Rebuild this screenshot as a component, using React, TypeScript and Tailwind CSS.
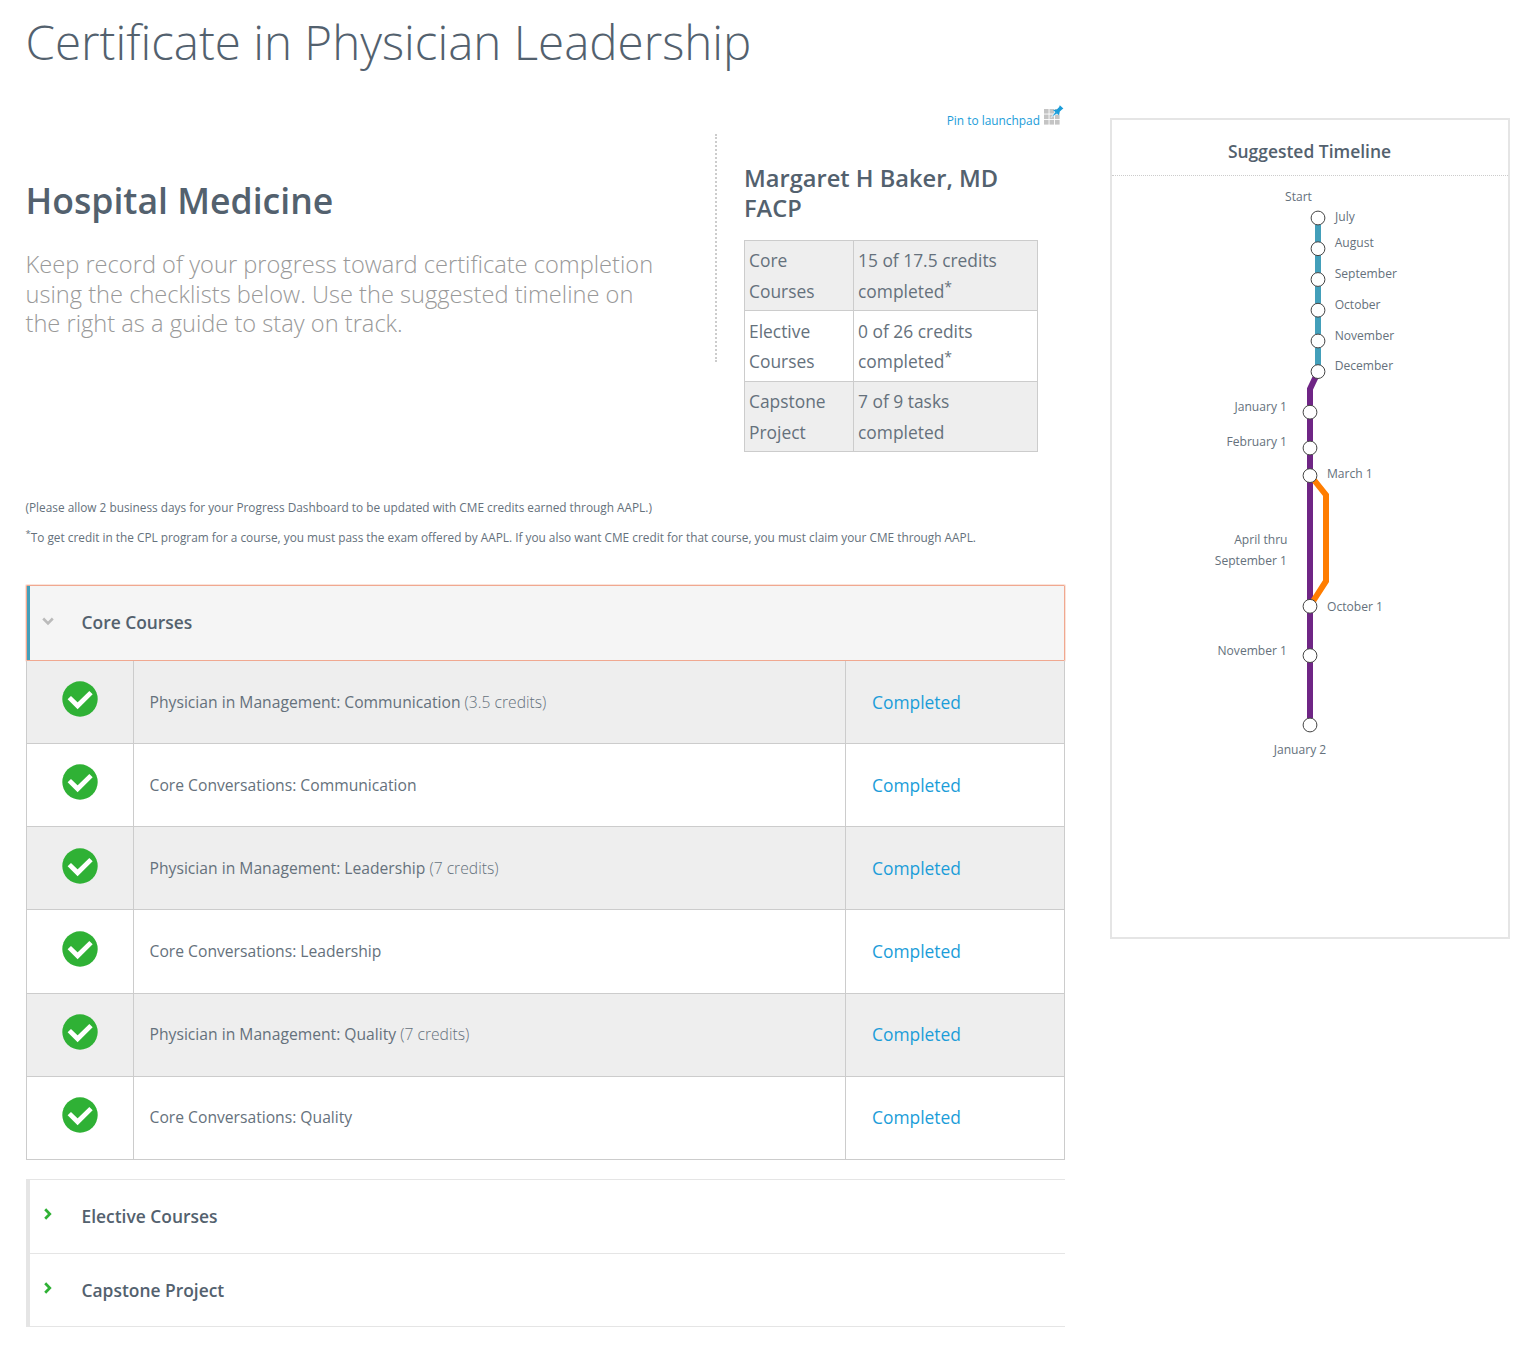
interface Course {
  title: string
  credits?: string
}

const courses: Course[] = [
  { title: 'Physician in Management: Communication', credits: '(3.5 credits)' },
  { title: 'Core Conversations: Communication' },
  { title: 'Physician in Management: Leadership', credits: '(7 credits)' },
  { title: 'Core Conversations: Leadership' },
  { title: 'Physician in Management: Quality', credits: '(7 credits)' },
  { title: 'Core Conversations: Quality' },
]

const progress = [
  { name: 'Core Courses', value: '15 of 17.5 credits', note: true },
  { name: 'Elective Courses', value: '0 of 26 credits', note: true },
  { name: 'Capstone Project', value: '7 of 9 tasks', note: false },
]

// stops and labels share the coordinate space of the timeline svg
const stops = [
  [206, 42], [206, 72.7], [206, 103.5], [206, 134.2], [206, 165], [206, 195.6],
  [198, 236.2], [198, 272], [198, 299.6], [198, 430.3], [198, 479.6], [198, 549],
]

const labels: { text: string; x: number; y: number; anchor: 'start' | 'middle' | 'end' }[] = [
  { text: 'Start', x: 186.5, y: 25, anchor: 'middle' },
  { text: 'July', x: 223, y: 45, anchor: 'start' },
  { text: 'August', x: 222.7, y: 71.4, anchor: 'start' },
  { text: 'September', x: 222.7, y: 102, anchor: 'start' },
  { text: 'October', x: 222.7, y: 133, anchor: 'start' },
  { text: 'November', x: 222.7, y: 163.5, anchor: 'start' },
  { text: 'December', x: 222.7, y: 194.2, anchor: 'start' },
  { text: 'January 1', x: 175, y: 235, anchor: 'end' },
  { text: 'February 1', x: 175, y: 270.4, anchor: 'end' },
  { text: 'March 1', x: 215, y: 302, anchor: 'start' },
  { text: 'April thru', x: 175.5, y: 368.3, anchor: 'end' },
  { text: 'September 1', x: 175, y: 389, anchor: 'end' },
  { text: 'October 1', x: 215, y: 434.5, anchor: 'start' },
  { text: 'November 1', x: 175, y: 479.3, anchor: 'end' },
  { text: 'January 2', x: 188, y: 578, anchor: 'middle' },
]

function PinIcon() {
  return (
    <svg width="20" height="21" viewBox="0 0 20 21">
      <g fill="#c4c4c4">
        {[4, 9.5, 15].map(y =>
          [0, 5.5, 11].map(x => <rect key={`${x}-${y}`} x={x} y={y} width="4.6" height="4.6" />)
        )}
      </g>
      {/* pin */}
      <path d="M7 12.5 L11.5 6.5 L13.5 8.5 Z" fill="#1b9dd9" stroke="#fff" strokeWidth="0.6" />
      <path d="M15.8 0.2 L19.4 3.6 L18 4.4 L15.6 6.8 L15 10.2 L9 5 L12.8 4.4 L15.2 2 Z" fill="#1b9dd9" />
    </svg>
  )
}

function CheckIcon() {
  return (
    <svg width="36" height="36" viewBox="0 0 36 36" fill="none">
      <circle cx="18" cy="18" r="17.7" fill="#2fb135" />
      <path d="M7.3 16.6 L15.6 24.8 L29 11.6" stroke="#fff" strokeWidth="4.8" />
    </svg>
  )
}

function Timeline() {
  return (
    <aside className="mt-[118px] ml-[45px] h-[821px] w-[400px] shrink-0 border-2 border-[#e5e5e5]">
      <h4 className="h-[56px] border-b border-dotted border-[#ccc] pt-[16px] pr-[1px] text-center text-[17.45px] leading-[31px] font-semibold">
        Suggested Timeline
      </h4>
      <svg width="396" height="640" viewBox="0 0 396 640" fill="none">
        <path d="M206 41 V196" stroke="#439fba" strokeWidth="6" />
        <path d="M206 196 L198 213 V549" stroke="#6f2585" strokeWidth="6" />
        <path d="M198 299 L214 319 V405 L198 430" stroke="#ff7d00" strokeWidth="6" />
        {stops.map(([cx, cy]) => (
          <circle key={cy} cx={cx} cy={cy} r="6.9" fill="#fff" stroke="#444" strokeWidth="1" />
        ))}
        <g fill="#65717c" fontSize="12.08">
          {labels.map(l => (
            <text key={l.text} x={l.x} y={l.y} textAnchor={l.anchor}>{l.text}</text>
          ))}
        </g>
      </svg>
    </aside>
  )
}

function Section({ title }: { title: string }) {
  return (
    <div className="flex h-[74px] items-center border-b border-[#e5e5e5] last:h-[73px]">
      <svg className="mb-[4px] ml-[13.5px] shrink-0" width="8" height="12" viewBox="0 0 8 12" fill="none">
        <path d="M1.2 1.2 L5.8 6 L1.2 10.8" stroke="#2fb135" strokeWidth="2.7" />
      </svg>
      <h3 className="ml-[30px] text-[17.4px] font-semibold">{title}</h3>
    </div>
  )
}

export default function App() {
  return (
    <div className="flex h-[1350px] bg-white pl-[26px] font-['Open_Sans',sans-serif] text-[#53616e]">
      <main className="w-[1039px] shrink-0">
        <h1 className="-ml-[0.5px] pt-[12px] text-[47.5px] leading-[60px] font-light">Certificate in Physician Leadership</h1>

        <div className="mt-[33px] flex h-[29px] items-start justify-end text-[11.9px] text-[#1b9dd9]">
          <span className="mt-[7px] leading-[16px]">Pin to launchpad</span>
          <span className="mr-[1px] ml-[4px]"><PinIcon /></span>
        </div>

        <div className="flex h-[346px] items-start">
          <div className="-ml-[0.5px] h-[228px] w-[691.5px] border-r-2 border-dotted border-[#ccc] pt-[43px]">
            <h2 className="text-[35.6px] leading-[46px] font-semibold">Hospital Medicine</h2>
            <p className="mt-[27px] w-[640px] text-[23.65px] leading-[29.7px] font-light text-[#999]">
              Keep record of your progress toward certificate completion using the checklists below. Use the suggested timeline on the right as a guide to stay on track.
            </p>
          </div>
          <div className="ml-[27px] w-[294px] pt-[29px]">
            <h3 className="text-[23.65px] leading-[30px] font-semibold">Margaret H Baker, MD FACP</h3>
            <table className="mt-[17px] w-full table-fixed border-collapse text-[17.4px] leading-[30.7px] text-[#65717c]">
              <tbody>
                {progress.map(p => (
                  <tr key={p.name} className="h-[70.3px] odd:bg-[#eee]">
                    <td className="w-[109px] border border-[#ccc] pt-[4.4px] pl-[4px] align-top">{p.name}</td>
                    <td className="border border-[#ccc] pt-[4.4px] pl-[4px] align-top">
                      <div>{p.value}</div>
                      <div className="flex">
                        <span>completed</span>
                        {p.note && <span className="-mt-[4px] text-[14px]">*</span>}
                      </div>
                    </td>
                  </tr>
                ))}
              </tbody>
            </table>
          </div>
        </div>

        <div className="mt-[12px] -ml-[0.5px] text-[11.84px] leading-[30.5px] text-[#65717c]">
          <p>(Please allow 2 business days for your Progress Dashboard to be updated with CME credits earned through AAPL.)</p>
          <p className="-mt-[0.5px]"><sup className="text-[9.5px] leading-none">*</sup>To get credit in the CPL program for a course, you must pass the exam offered by AAPL. If you also want CME credit for that course, you must claim your CME through AAPL.</p>
        </div>

        <div className="mt-[32.5px] flex h-[76px] items-center rounded-[1px] border border-[#f0a890] bg-[#f5f5f5] shadow-[0_0_0_1px_#fbe3da]">
          <div className="h-full w-[3px] bg-[#439fba]" />
          <svg className="mb-[4px] ml-[11.5px] shrink-0" width="12" height="9" viewBox="0 0 12 9" fill="none">
            <path d="M1.2 1.5 L6 6.3 L10.8 1.5" stroke="#bbb" strokeWidth="2.6" />
          </svg>
          <h3 className="ml-[28px] pb-[2px] text-[17.4px] font-semibold">Core Courses</h3>
        </div>

        <div className="border-x border-[#ccc]">
          {courses.map(c => (
            <div key={c.title} className="flex h-[83.17px] border-b border-[#ccc] odd:bg-[#eee]">
              <div className="flex w-[107.4px] items-start justify-center border-r border-[#ccc] pt-[20.3px] pr-[1px]">
                <CheckIcon />
              </div>
              <div className="flex w-[711.6px] items-center border-r border-[#ccc] pt-[0.6px] pl-[15.2px] text-[15.67px] text-[#65717c]">
                <span>{c.title} <span className="font-light">{c.credits}</span></span>
              </div>
              <a href="#" className="flex flex-1 items-center pb-[1px] pl-[26px] text-[17.4px] text-[#1b9dd9]">Completed</a>
            </div>
          ))}
        </div>

        <div className="mt-[19px] border-t border-l-4 border-t-[#e5e5e5] border-l-[#e5e5e5]">
          <Section title="Elective Courses" />
          <Section title="Capstone Project" />
        </div>
      </main>
      <Timeline />
    </div>
  )
}
